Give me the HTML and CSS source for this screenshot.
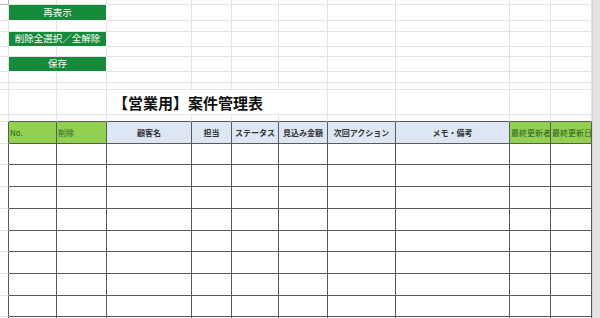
FILE: index.html
```html
<!DOCTYPE html>
<html lang="ja">
<head>
  <meta charset="UTF-8">
  <title>案件管理表</title>
  <link rel="stylesheet" href="styles.css">
</head>
<body>
  <table class="sheet">
    <colgroup>
      <col class="c-idx"><col class="c-no"><col class="c-del"><col class="c-cust"><col class="c-rep">
      <col class="c-stat"><col class="c-amt"><col class="c-next"><col class="c-memo"><col class="c-upd"><col class="c-upd">
    </colgroup>
    <tr class="r-edge"><td class="corner"></td><td></td><td></td><td></td><td></td><td></td><td></td><td></td><td></td><td></td><td></td></tr>
    <tr class="r-btn-lg"><td></td><td colspan="2" class="btn">再表示</td><td></td><td></td><td></td><td></td><td></td><td></td><td></td><td></td></tr>
    <tr class="r-gap"><td></td><td></td><td></td><td></td><td></td><td></td><td></td><td></td><td></td><td></td><td></td></tr>
    <tr class="r-btn"><td></td><td colspan="2" class="btn">削除全選択／全解除</td><td></td><td></td><td></td><td></td><td></td><td></td><td></td><td></td></tr>
    <tr class="r-gap-sm"><td></td><td></td><td></td><td></td><td></td><td></td><td></td><td></td><td></td><td></td><td></td></tr>
    <tr class="r-btn"><td></td><td colspan="2" class="btn">保存</td><td></td><td></td><td></td><td></td><td></td><td></td><td></td><td></td></tr>
    <tr class="r-gap"><td></td><td></td><td></td><td></td><td></td><td></td><td></td><td></td><td></td><td></td><td></td></tr>
    <tr class="r-thin"><td></td><td></td><td></td><td></td><td></td><td></td><td></td><td></td><td></td><td></td><td></td></tr>
    <tr class="r-title"><td></td><td></td><td></td><td colspan="4" class="title">【営業用】案件管理表</td><td></td><td></td><td></td><td></td></tr>
    <tr class="r-thin"><td></td><td class="above"></td><td class="above"></td><td class="above"></td><td class="above"></td><td class="above"></td><td class="above"></td><td class="above"></td><td class="above"></td><td class="above"></td><td class="above"></td></tr>
    <tr class="r-head">
      <td class="lead"></td>
      <td class="box green">No.</td>
      <td class="box green">削除</td>
      <td class="box blue">顧客名</td>
      <td class="box blue">担当</td>
      <td class="box blue">ステータス</td>
      <td class="box blue">見込み金額</td>
      <td class="box blue">次回アクション</td>
      <td class="box blue">メモ・備考</td>
      <td class="box green">最終更新者</td>
      <td class="box green">最終更新日</td>
    </tr>
    <tr class="r-row-s"><td class="lead"></td><td class="box"></td><td class="box"></td><td class="box"></td><td class="box"></td><td class="box"></td><td class="box"></td><td class="box"></td><td class="box"></td><td class="box"></td><td class="box"></td></tr>
    <tr class="r-row"><td class="lead"></td><td class="box"></td><td class="box"></td><td class="box"></td><td class="box"></td><td class="box"></td><td class="box"></td><td class="box"></td><td class="box"></td><td class="box"></td><td class="box"></td></tr>
    <tr class="r-row"><td class="lead"></td><td class="box"></td><td class="box"></td><td class="box"></td><td class="box"></td><td class="box"></td><td class="box"></td><td class="box"></td><td class="box"></td><td class="box"></td><td class="box"></td></tr>
    <tr class="r-row"><td class="lead"></td><td class="box"></td><td class="box"></td><td class="box"></td><td class="box"></td><td class="box"></td><td class="box"></td><td class="box"></td><td class="box"></td><td class="box"></td><td class="box"></td></tr>
    <tr class="r-row-s"><td class="lead"></td><td class="box"></td><td class="box"></td><td class="box"></td><td class="box"></td><td class="box"></td><td class="box"></td><td class="box"></td><td class="box"></td><td class="box"></td><td class="box"></td></tr>
    <tr class="r-row"><td class="lead"></td><td class="box"></td><td class="box"></td><td class="box"></td><td class="box"></td><td class="box"></td><td class="box"></td><td class="box"></td><td class="box"></td><td class="box"></td><td class="box"></td></tr>
    <tr class="r-row"><td class="lead"></td><td class="box"></td><td class="box"></td><td class="box"></td><td class="box"></td><td class="box"></td><td class="box"></td><td class="box"></td><td class="box"></td><td class="box"></td><td class="box"></td></tr>
    <tr class="r-row-s"><td class="lead"></td><td class="box"></td><td class="box"></td><td class="box"></td><td class="box"></td><td class="box"></td><td class="box"></td><td class="box"></td><td class="box"></td><td class="box"></td><td class="box"></td></tr>
    <tr class="r-row"><td class="lead"></td><td class="box"></td><td class="box"></td><td class="box"></td><td class="box"></td><td class="box"></td><td class="box"></td><td class="box"></td><td class="box"></td><td class="box"></td><td class="box"></td></tr>
  </table>
  <div class="scrollbar"></div>
</body>
</html>
```

FILE: styles.css
```css
body { margin: 0; display: flex; height: 318px; overflow: hidden; background: #fff; font-family: "Noto Sans CJK JP", "Noto Sans", sans-serif; }

.sheet { border-collapse: separate; border-spacing: 0; table-layout: fixed; width: 592px; flex: none; align-self: flex-start; }
.sheet td { padding: 0; border-right: 1px solid #e3e3e3; border-bottom: 1px solid #e3e3e3; overflow: hidden; white-space: nowrap; font-size: 8px; line-height: 1; color: #222; }

.c-idx { width: 9px; }
.c-no { width: 48px; }
.c-del { width: 50px; }
.c-cust { width: 85px; }
.c-rep { width: 40px; }
.c-stat { width: 47px; }
.c-amt { width: 49px; }
.c-next { width: 68px; }
.c-memo { width: 114px; }
.c-upd { width: 41px; }

.r-edge { height: 5px; }
.r-btn-lg { height: 16px; }
.r-btn { height: 15px; }
.r-gap { height: 11px; }
.r-gap-sm { height: 10px; }
.r-thin { height: 7px; }
.r-title { height: 25px; }
.r-head { height: 22px; }
.r-row { height: 22px; }
.r-row-s { height: 21px; }

.sheet td.corner { border-right-color: #b5b5b5; border-bottom-color: #b5b5b5; }

.sheet td.btn { background: #168a3b; color: #fff; font-size: 9.5px; text-align: center; border-right-color: #fff; border-bottom-color: #fff; }

.sheet td.title { font-size: 15px; font-weight: 700; color: #111; padding-left: 6px; padding-top: 1px; }

.sheet td.above { border-bottom-color: #5a5a5a; }
.sheet td.lead { border-right-color: #5a5a5a; }
.sheet td.box { border-right-color: #5a5a5a; border-bottom-color: #5a5a5a; }

.sheet td.green { background: #92d050; color: #2f5e1d; padding-left: 1px; }
.sheet td.blue { background: #dce7f3; text-align: center; font-weight: 700; color: #333; }

.scrollbar { width: 8px; height: 318px; background: #e4e4e4; border-left: 1px solid #d2d2d2; box-sizing: border-box; }
```
